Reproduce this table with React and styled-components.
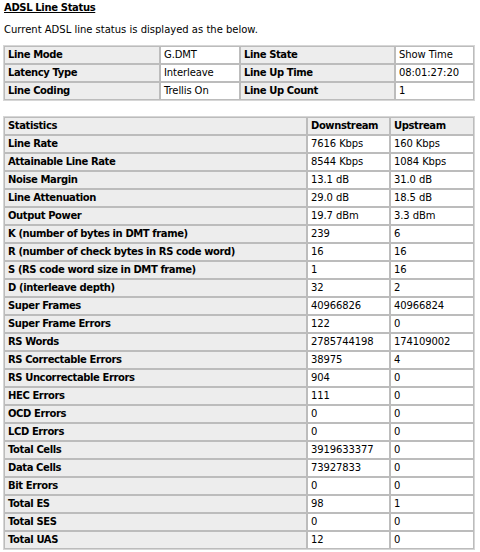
import React from "react";
import styled, { createGlobalStyle } from "styled-components";

const Global = createGlobalStyle`
  html, body { margin: 0; padding: 0; background: #fff; }
  body { font-family: "DejaVu Sans", Verdana, sans-serif; font-size: 10px; color: #000; }
`;

const Page = styled.div`
  padding: 1px 3px 0 3px;
  box-sizing: border-box;
  width: 477px;
`;

const Title = styled.div`
  font-weight: bold;
  text-decoration: underline;
  font-size: 10px;
  letter-spacing: -0.35px;
  height: 14px;
  line-height: 14px;
  padding-left: 1px;
`;

const Desc = styled.div`
  margin-top: 8px;
  height: 14px;
  line-height: 14px;
  padding-left: 1px;
`;

const Table = styled.table`
  border-collapse: separate;
  border-spacing: 0;
  width: 470px;
  margin-top: ${(p) => p.$top}px;
  border: 1px solid #d6d6d6;
  table-layout: fixed;
`;

const Cell = styled.td`
  border: 1px solid #bcbcbc;
  height: 16px;
  padding: 0 0 0 3px;
  line-height: 16px;
  white-space: nowrap;
  overflow: hidden;
  font-weight: ${(p) => (p.$label ? "bold" : "normal")};
  letter-spacing: ${(p) => (p.$label ? "-0.4px" : "-0.1px")};
  background: ${(p) => (p.$label ? "#ededed" : "#ffffff")};
`;

const Col = styled.col``;

const info = [
  ["Line Mode", "G.DMT", "Line State", "Show Time"],
  ["Latency Type", "Interleave", "Line Up Time", "08:01:27:20"],
  ["Line Coding", "Trellis On", "Line Up Count", "1"],
];

const stats = [
  ["Line Rate", "7616 Kbps", "160 Kbps"],
  ["Attainable Line Rate", "8544 Kbps", "1084 Kbps"],
  ["Noise Margin", "13.1 dB", "31.0 dB"],
  ["Line Attenuation", "29.0 dB", "18.5 dB"],
  ["Output Power", "19.7 dBm", "3.3 dBm"],
  ["K (number of bytes in DMT frame)", "239", "6"],
  ["R (number of check bytes in RS code word)", "16", "16"],
  ["S (RS code word size in DMT frame)", "1", "16"],
  ["D (interleave depth)", "32", "2"],
  ["Super Frames", "40966826", "40966824"],
  ["Super Frame Errors", "122", "0"],
  ["RS Words", "2785744198", "174109002"],
  ["RS Correctable Errors", "38975", "4"],
  ["RS Uncorrectable Errors", "904", "0"],
  ["HEC Errors", "111", "0"],
  ["OCD Errors", "0", "0"],
  ["LCD Errors", "0", "0"],
  ["Total Cells", "3919633377", "0"],
  ["Data Cells", "73927833", "0"],
  ["Bit Errors", "0", "0"],
  ["Total ES", "98", "1"],
  ["Total SES", "0", "0"],
  ["Total UAS", "12", "0"],
];

export default function App() {
  return (
    <>
      <Global />
      <Page>
        <Title>ADSL Line Status</Title>
        <Desc>Current ADSL line status is displayed as the below.</Desc>
        <Table $top={8}>
          <colgroup>
            <Col style={{ width: 156 }} />
            <Col style={{ width: 80 }} />
            <Col style={{ width: 155 }} />
            <Col style={{ width: 79 }} />
          </colgroup>
          <tbody>
            {info.map((r) => (
              <tr key={r[0]}>
                <Cell $label>{r[0]}</Cell>
                <Cell>{r[1]}</Cell>
                <Cell $label>{r[2]}</Cell>
                <Cell>{r[3]}</Cell>
              </tr>
            ))}
          </tbody>
        </Table>
        <Table $top={15}>
          <colgroup>
            <Col style={{ width: 303 }} />
            <Col style={{ width: 83 }} />
            <Col style={{ width: 84 }} />
          </colgroup>
          <tbody>
            <tr>
              <Cell $label>Statistics</Cell>
              <Cell $label>Downstream</Cell>
              <Cell $label>Upstream</Cell>
            </tr>
            {stats.map((r) => (
              <tr key={r[0]}>
                <Cell $label>{r[0]}</Cell>
                <Cell>{r[1]}</Cell>
                <Cell>{r[2]}</Cell>
              </tr>
            ))}
          </tbody>
        </Table>
      </Page>
    </>
  );
}
